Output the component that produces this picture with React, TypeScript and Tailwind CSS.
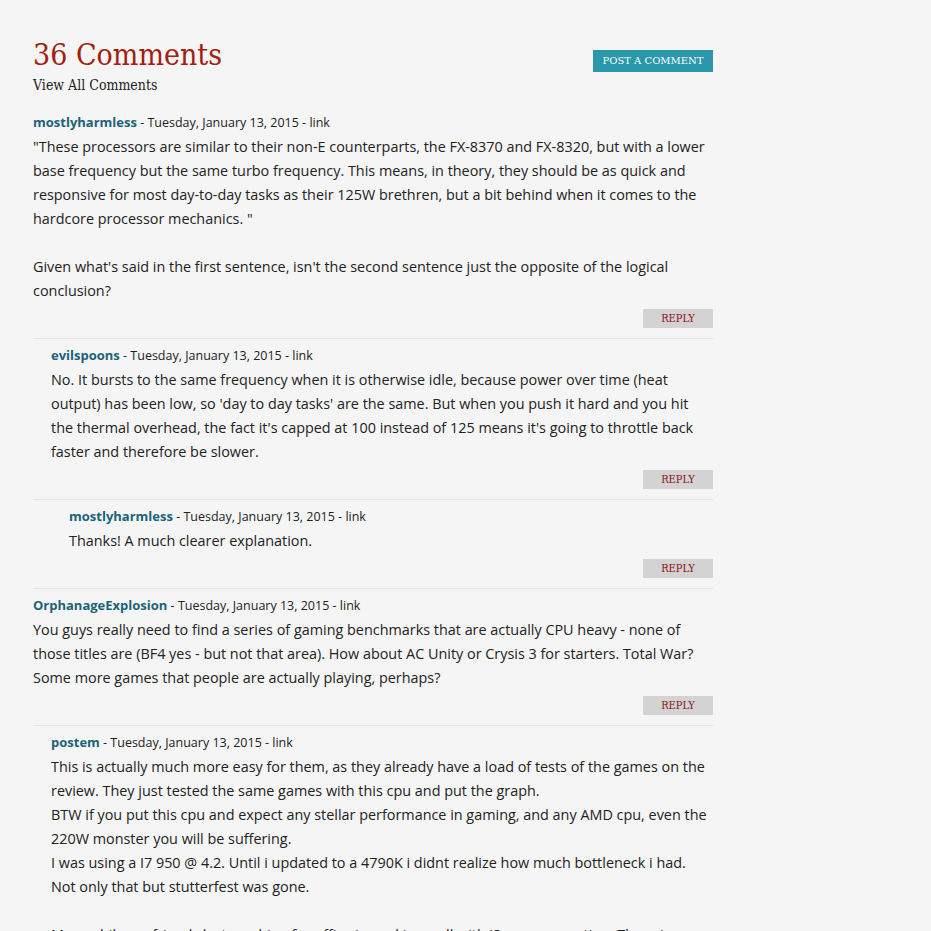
import React from "react";

const sans = { fontFamily: '"Open Sans", "Noto Sans", sans-serif' };
const serif = { fontFamily: '"DejaVu Serif", "Liberation Serif", serif' };
const serifC = {
  fontFamily: '"DejaVu Serif Condensed", "DejaVu Serif", "Liberation Serif", serif',
  fontStretch: "condensed" as const,
};

function Meta({ name }: { name: string }) {
  return (
    <div className="text-[13px] leading-[24px] text-[#222]" style={sans}>
      <span className="font-bold text-[#1b6377]">{name}</span>
      <span className="text-[12.5px]"> - Tuesday, January 13, 2015 - link</span>
    </div>
  );
}

function Reply() {
  return (
    <div className="flex justify-end">
      <div
        className="w-[70px] h-[19px] bg-[#d3d3d3] text-[#8b1010] text-[11px] leading-[19px] text-center"
        style={serifC}
      >
        REPLY
      </div>
    </div>
  );
}

const body = "text-[14.4px] leading-[24px] text-[#222]";

function Comment({
  name,
  indent,
  lines,
}: {
  name: string;
  indent: string;
  lines: React.ReactNode;
}) {
  return (
    <div className="border-t border-[#e4e4e4] pt-[4px] pb-[10px]">
      <div className={indent}>
        <Meta name={name} />
        <div className={body} style={sans}>
          {lines}
        </div>
      </div>
      <div className="mt-[6px]">
        <Reply />
      </div>
    </div>
  );
}

export default function App() {
  return (
    <div className="min-h-[931px] bg-[#f5f5f5] overflow-hidden">
      <div className="w-[680px] ml-[33px] pt-[36px]">
        <div className="flex justify-between items-start">
          <div>
            <div className="text-[30px] leading-[38px] text-[#a5200c]" style={serifC}>
              36 Comments
            </div>
            <div className="text-[14px] leading-[20px] text-[#222] mt-[1px]" style={serifC}>
              View All Comments
            </div>
          </div>
          <div
            className="mt-[14px] w-[120px] h-[22px] bg-[#2a97ab] text-white text-[10px] leading-[22px] text-center"
            style={serif}
          >
            POST A COMMENT
          </div>
        </div>

        <div className="mt-[15px]">
          <div className="pb-[10px]">
            <Meta name="mostlyharmless" />
            <div className={body} style={sans}>
              "These processors are similar to their non-E counterparts, the FX-8370 and FX-8320, but with a lower base frequency but the same turbo frequency. This means, in theory, they should be as quick and responsive for most day-to-day tasks as their 125W brethren, but a bit behind when it comes to the hardcore processor mechanics. "
              <br />
              <br />
              Given what's said in the first sentence, isn't the second sentence just the opposite of the logical conclusion?
            </div>
            <div className="mt-[6px]">
              <Reply />
            </div>
          </div>

          <Comment
            name="evilspoons"
            indent="pl-[18px]"
            lines={
              <>
                No. It bursts to the same frequency when it is otherwise idle, because power over time (heat output) has been low, so 'day to day tasks' are the same. But when you push it hard and you hit the thermal overhead, the fact it's capped at 100 instead of 125 means it's going to throttle back faster and therefore be slower.
              </>
            }
          />
          <Comment
            name="mostlyharmless"
            indent="pl-[36px]"
            lines={<>Thanks! A much clearer explanation.</>}
          />
          <Comment
            name="OrphanageExplosion"
            indent=""
            lines={
              <>
                You guys really need to find a series of gaming benchmarks that are actually CPU heavy - none of those titles are (BF4 yes - but not that area). How about AC Unity or Crysis 3 for starters. Total War? Some more games that people are actually playing, perhaps?
              </>
            }
          />
          <div className="border-t border-[#e4e4e4] pt-[4px]">
            <div className="pl-[18px]">
              <Meta name="postem" />
              <div className={body} style={sans}>
                This is actually much more easy for them, as they already have a load of tests of the games on the review. They just tested the same games with this cpu and put the graph.
                <br />
                BTW if you put this cpu and expect any stellar performance in gaming, and any AMD cpu, even the 220W monster you will be suffering.
                <br />
                I was using a I7 950 @ 4.2. Until i updated to a 4790K i didnt realize how much bottleneck i had.
                <br />
                Not only that but stutterfest was gone.
                <br />
                <br />
                Meanwhile my friends last machine for office is working well with i3 new generation. There is no lag at all.
              </div>
            </div>
          </div>
        </div>
      </div>
    </div>
  );
}
